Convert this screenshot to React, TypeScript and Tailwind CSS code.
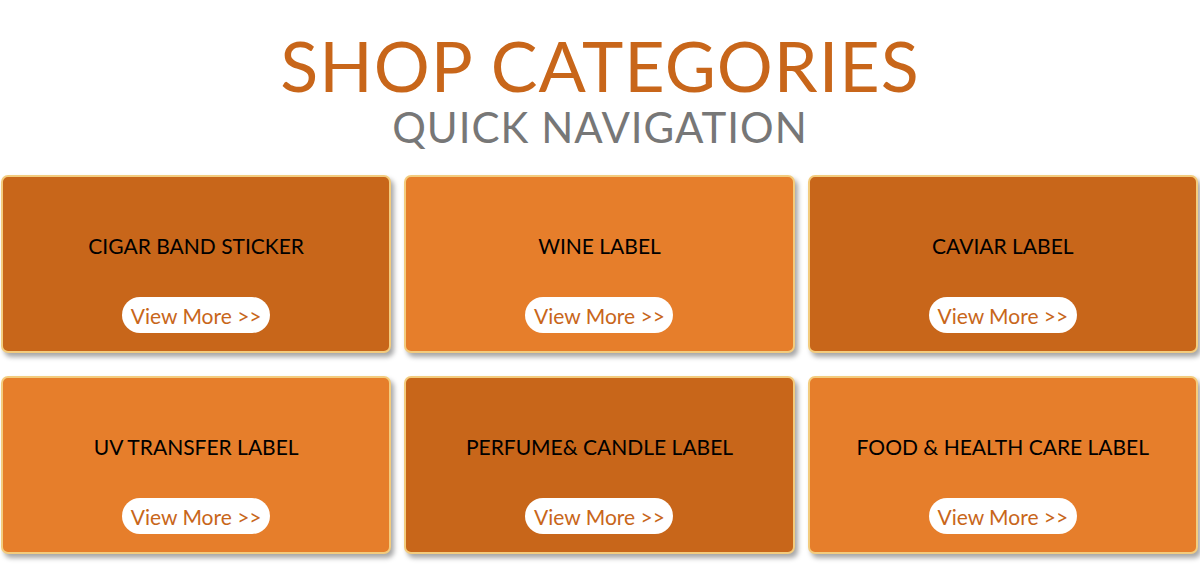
const categories = [
  { name: 'CIGAR BAND STICKER', dark: true },
  { name: 'WINE LABEL', dark: false },
  { name: 'CAVIAR LABEL', dark: true },
  { name: 'UV TRANSFER LABEL', dark: false },
  { name: 'PERFUME& CANDLE LABEL', dark: true },
  { name: 'FOOD & HEALTH CARE LABEL', dark: false },
];

function CategoryCard({ name, dark }: { name: string; dark: boolean }) {
  return (
    <div
      className={`h-[178px] rounded-[7px] border-2 border-[#f3cc7e] flex flex-col items-center shadow-[3px_4px_5px_rgba(0,0,0,0.35)] ${
        dark ? 'bg-[#c8661a]' : 'bg-[#e67e2b]'
      }`}
    >
      <div className="mt-[53px] h-[30px] flex items-center text-[21px] leading-none text-black">
        {name}
      </div>
      <div className="mt-[37px] w-[148px] h-[36px] shrink-0 rounded-full bg-white flex items-center justify-center text-[21px] leading-none text-[#c8661a]">
        View More &gt;&gt;
      </div>
    </div>
  );
}

export default function App() {
  return (
    <div className="w-[1200px] h-[578px] bg-white font-['Lato','Noto_Sans',sans-serif] overflow-hidden">
      <div className="flex flex-col items-center pt-[30px]">
        <h1 className="text-[70px] leading-[70px] tracking-[1px] text-[#c8661a]">SHOP CATEGORIES</h1>
        <h2 className="mt-[6px] text-[42px] leading-[42px] tracking-[1px] text-[#777777]">QUICK NAVIGATION</h2>
      </div>
      <div className="mt-[27px] grid grid-cols-3 gap-x-[13px] gap-y-[23px] pl-[1px] pr-[2px]">
        {categories.map((c) => (
          <CategoryCard key={c.name} name={c.name} dark={c.dark} />
        ))}
      </div>
    </div>
  );
}
